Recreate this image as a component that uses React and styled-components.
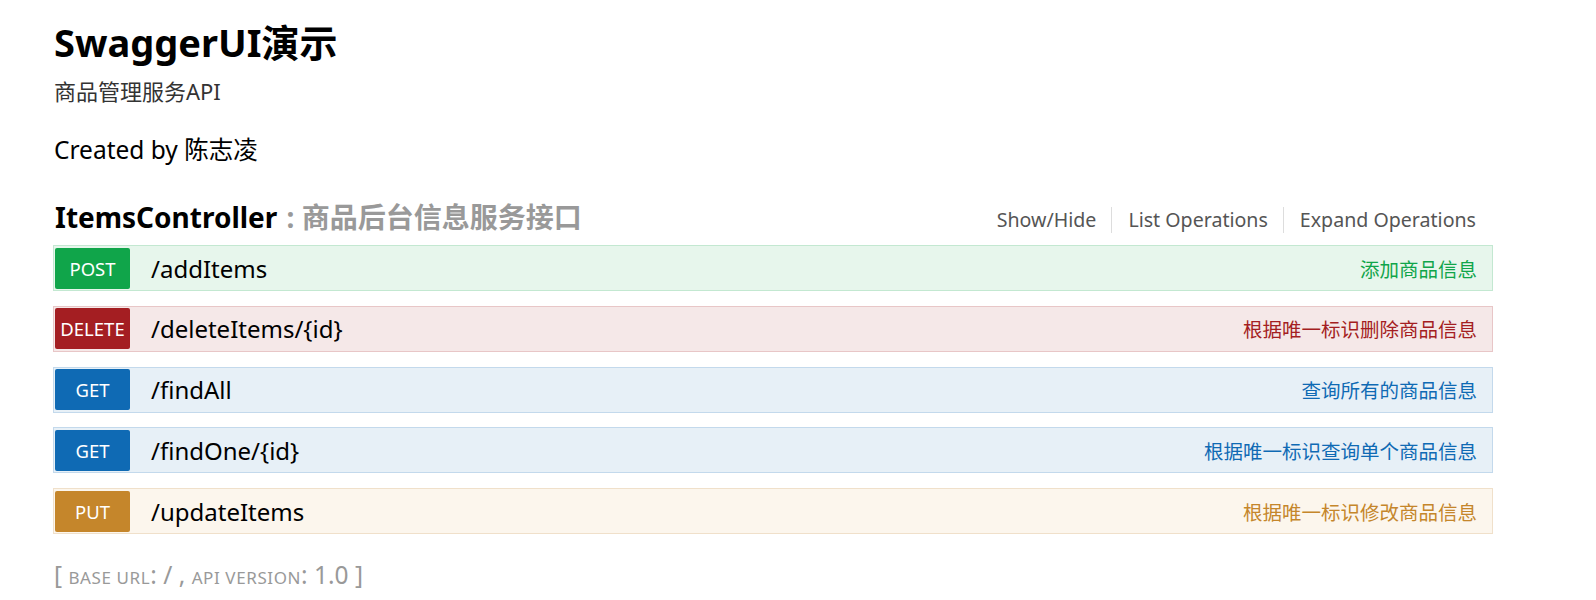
import React from "react";
import styled, { createGlobalStyle } from "styled-components";

const Global = createGlobalStyle`
  html, body { margin: 0; padding: 0; background: #fff; }
  body {
    font-family: "Noto Sans", "Noto Sans CJK SC", sans-serif;
    color: #000;
  }
`;

const Page = styled.div`
  width: 1440px;
  padding: 14px 0 0 53px;
`;

const Info = styled.div`
  padding-left: 1px;
`;

const Title = styled.h1`
  margin: 0;
  font-size: 38px;
  line-height: 56px;
  font-weight: 700;
  color: #000;
`;

const Subtitle = styled.div`
  margin-top: 6px;
  font-size: 22px;
  line-height: 30px;
  color: #333;
`;

const Contact = styled.div`
  margin-top: 28px;
  font-size: 24.5px;
  line-height: 32px;
  color: #000;
`;

const ResourceHeader = styled.div`
  display: flex;
  align-items: flex-end;
  justify-content: space-between;
  margin-top: 31px;
  padding: 0 17px 0 2px;
  height: 38px;
`;

const Heading = styled.h2`
  margin: 0;
  font-size: 28px;
  line-height: 36px;
  font-weight: 700;
  color: #000;
  white-space: nowrap;
`;

const HeadingNote = styled.span`
  color: #999;
  margin-left: 2px;
`;

const Links = styled.ul`
  display: flex;
  margin: 0 0 2px;
  padding: 0;
  list-style: none;
`;

const LinkItem = styled.li`
  font-size: 19.6px;
  line-height: 26px;
  color: #555;
  padding: 0 15px 0 16px;
  border-left: 1px solid #ddd;
  &:first-child { border-left: none; }
  &:last-child { padding-right: 0; }
`;

const Ops = styled.div`
  display: flex;
  flex-direction: column;
  gap: 14.75px;
  margin-top: 10px;
`;

const palette = {
  post: { main: "#10a54a", bg: "#e7f6ec", border: "#c3e8d1" },
  delete: { main: "#a41e22", bg: "#f5e8e8", border: "#e8c6c7" },
  get: { main: "#0f6ab4", bg: "#e7f0f7", border: "#c3d9ec" },
  put: { main: "#c5862b", bg: "#fcf6ed", border: "#f0e0ca" },
};

const OpRow = styled.div`
  display: flex;
  align-items: center;
  height: 46px;
  box-sizing: border-box;
  padding: 0 15px 0 1px;
  background: ${(p) => palette[p.$m].bg};
  border: 1px solid ${(p) => palette[p.$m].border};
`;

const Badge = styled.span`
  flex: none;
  width: 75px;
  height: 41px;
  display: flex;
  align-items: center;
  justify-content: center;
  border-radius: 2px;
  background: ${(p) => palette[p.$m].main};
  color: #fff;
  font-size: 18.5px;
`;

const Path = styled.span`
  margin-left: 21px;
  font-size: 24px;
  color: #000;
  flex: 1;
`;

const Summary = styled.span`
  font-size: 19.5px;
  color: ${(p) => palette[p.$m].main};
`;

const Footer = styled.div`
  margin-top: 25px;
  font-size: 24.5px;
  line-height: 32px;
  color: #999;
  padding-left: 1px;
`;

const Small = styled.span`
  font-size: 17px;
  text-transform: uppercase;
  letter-spacing: 0.6px;
`;

const ops = [
  { m: "post", label: "POST", path: "/addItems", summary: "添加商品信息" },
  { m: "delete", label: "DELETE", path: "/deleteItems/{id}", summary: "根据唯一标识删除商品信息" },
  { m: "get", label: "GET", path: "/findAll", summary: "查询所有的商品信息" },
  { m: "get", label: "GET", path: "/findOne/{id}", summary: "根据唯一标识查询单个商品信息" },
  { m: "put", label: "PUT", path: "/updateItems", summary: "根据唯一标识修改商品信息" },
];

export default function App() {
  return (
    <Page>
      <Global />
      <Info>
        <Title>SwaggerUI演示</Title>
        <Subtitle>商品管理服务API</Subtitle>
        <Contact>Created by 陈志凌</Contact>
      </Info>
      <ResourceHeader>
        <Heading>
          ItemsController <HeadingNote>: 商品后台信息服务接口</HeadingNote>
        </Heading>
        <Links>
          <LinkItem>Show/Hide</LinkItem>
          <LinkItem>List Operations</LinkItem>
          <LinkItem>Expand Operations</LinkItem>
        </Links>
      </ResourceHeader>
      <Ops>
        {ops.map((o, i) => (
          <OpRow key={i} $m={o.m}>
            <Badge $m={o.m}>{o.label}</Badge>
            <Path>{o.path}</Path>
            <Summary $m={o.m}>{o.summary}</Summary>
          </OpRow>
        ))}
      </Ops>
      <Footer>
        [ <Small>Base URL</Small>: / , <Small>API Version</Small>: 1.0 ]
      </Footer>
    </Page>
  );
}
